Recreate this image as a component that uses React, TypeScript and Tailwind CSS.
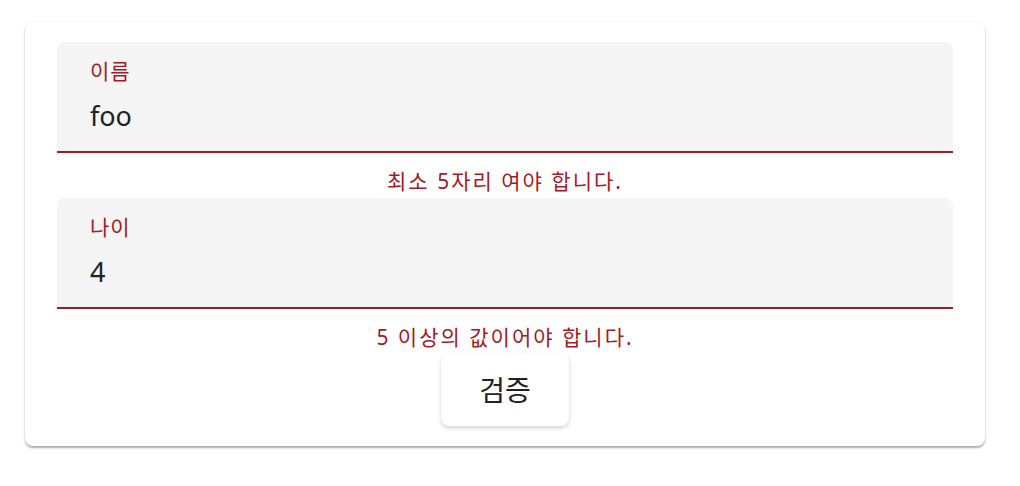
import { useState } from 'react'

type Field = {
  label: string
  value: string
  error: string
}

const FIELDS: Field[] = [
  { label: '이름', value: 'foo', error: '최소 5자리 여야 합니다.' },
  { label: '나이', value: '4', error: '5 이상의 값이어야 합니다.' },
]

export default function App() {
  const [fields, setFields] = useState(FIELDS)

  return (
    <div
      className="min-h-[486px] bg-white px-[25px] pt-[22px]"
      style={{ fontFamily: '"Noto Sans", "Noto Sans CJK KR", sans-serif' }}
    >
      <div className="flex h-[424px] w-[960px] flex-col rounded-lg bg-white px-8 pt-5 shadow-[0_2px_2px_rgba(0,0,0,0.3),0_0_4px_rgba(0,0,0,0.06)]">
        {fields.map((f, i) => (
          <div key={f.label} className="flex flex-col">
            <label className="flex h-[111px] flex-col rounded-t-lg border-b-2 border-[#a31b24] bg-[#f5f5f5] px-[33px] pt-[15px]">
              <span className="text-[21px] leading-[28px] tracking-[1px] text-[#a31b24]">{f.label}</span>
              <input
                className="mt-[14px] bg-transparent text-[27px] leading-[34px] text-[#222] outline-none"
                value={f.value}
                onChange={e =>
                  setFields(prev =>
                    prev.map((p, j) => (j === i ? { ...p, value: e.target.value } : p))
                  )
                }
              />
            </label>
            <div className="flex h-[45px] items-center justify-center pt-[12px] text-[21px] tracking-[2px] text-[#a31b24]">
              {f.error}
            </div>
          </div>
        ))}
        <div className="flex justify-center">
          <button className="h-[72px] w-[128px] rounded-lg bg-white text-[28px] text-[#222] shadow-[0_2px_4px_rgba(0,0,0,0.18)]">
            검증
          </button>
        </div>
      </div>
    </div>
  )
}
